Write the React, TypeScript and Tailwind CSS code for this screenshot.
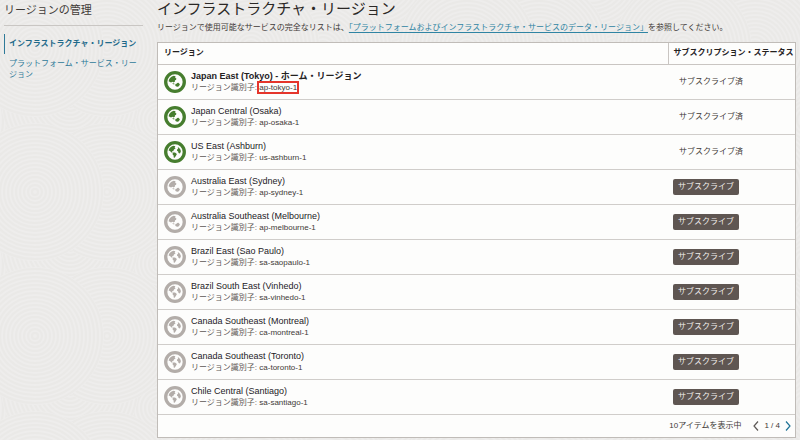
import { useState } from "react"

type GlobeKind = "asia" | "americas"

interface Region {
    name: string,
    id: string,
    globe: GlobeKind,
    subscribed?: boolean,
    home?: boolean
}

const regions: Region[] = [
    { name: "Japan East (Tokyo)", id: "ap-tokyo-1", globe: "asia", subscribed: true, home: true },
    { name: "Japan Central (Osaka)", id: "ap-osaka-1", globe: "asia", subscribed: true },
    { name: "US East (Ashburn)", id: "us-ashburn-1", globe: "americas", subscribed: true },
    { name: "Australia East (Sydney)", id: "ap-sydney-1", globe: "asia" },
    { name: "Australia Southeast (Melbourne)", id: "ap-melbourne-1", globe: "asia" },
    { name: "Brazil East (Sao Paulo)", id: "sa-saopaulo-1", globe: "americas" },
    { name: "Brazil South East (Vinhedo)", id: "sa-vinhedo-1", globe: "americas" },
    { name: "Canada Southeast (Montreal)", id: "ca-montreal-1", globe: "americas" },
    { name: "Canada Southeast (Toronto)", id: "ca-toronto-1", globe: "americas" },
    { name: "Chile Central (Santiago)", id: "sa-santiago-1", globe: "americas" },
]

const Globe = ({ kind, active }: { kind: GlobeKind, active?: boolean }) => (
    <svg viewBox="0 0 22 22" aria-hidden="true" className={`size-[22px] shrink-0 ${active ? "text-[#467d2e]" : "text-[#b3ada9]"}`}>
        <circle cx="11" cy="11" r="9.3" fill="none" stroke="currentColor" strokeWidth="3.3" />
        {kind === "asia" ? (
            <g fill="currentColor">
                <path d="M4.600 10.200C5 7.500 7 5.300 9.800 4.800l1.700.5-.3 1.400 1.200.9-.4 1.300-1.100.4.1 1.200-1.400 1-1.100-.8-1.500.9z" />
                <path d="M11.200 14.100c0-1 .9-1.400 1.500-1.400.3-.7 1.200-1.200 1.700-.9.4.6 1 1 1.500 1.400-.3 1.200-1.200 2.300-2.300 2.600-1.100.1-2.400-.5-2.400-1.700z" />
                <path d="M8.600 12.100l2 .6-.4.8-1.500-.4z" />
            </g>
        ) : (
            <g fill="currentColor">
                <path d="M4.600 9.400C5.200 7.100 6.900 5.400 9.300 4.800l2.100.4-.8 1.300 1 .8-1.600 1.300-.8 1.700-1.300-.3.800 1.600-1.300-.1-1.400-1.600z" />
                <path d="M8.900 11.400l2.100.1 1.900 1.400-.8 1.700-1.400 2.100-1-.1-.1-2.100-1.100-1.300z" />
                <path d="M13.700 6c1.700.8 2.900 2.300 3.200 4.200l-.9 2.200-1.500-.5-.3-1.400-1.200-.8.1-1.300 1.100-.8z" />
            </g>
        )}
    </svg>
)

const rings = [3, 7, 11, 15, 19, 23, 27, 31, 35, 39, 43, 47, 51, 55, 59, 63, 67]

const swirls = [
    [0, 20], [216, 20], [160, 120], [-56, 120], [160, -24],
    [70, 100], [70, -44], [286, 100], [107, 48], [107, 192], [35, 48], [35, 192], [251, 48],
]

const Backdrop = () => (
    <svg aria-hidden="true" className="absolute inset-0 -z-10 size-full">
        <defs>
            <pattern id="swirls" width="216" height="144" patternUnits="userSpaceOnUse">
                <rect width="216" height="144" fill="#edecea" />
                {swirls.map(([x, y]) => (
                    <g key={`${x}/${y}`} stroke="#eae9e7" strokeWidth="2" fill="none">
                        <circle cx={x} cy={y} r="69" fill="#eeedec" stroke="none" />
                        {rings.map((r) => <circle key={r} cx={x} cy={y} r={r} />)}
                    </g>
                ))}
            </pattern>
        </defs>
        <rect width="100%" height="100%" fill="url(#swirls)" />
    </svg>
)

const Chevron = ({ d }: { d: string }) => (
    <svg viewBox="0 0 6 10" aria-hidden="true" className="h-[10px] w-[6px]" fill="none" stroke="currentColor" strokeWidth="1.2">
        <path d={d} />
    </svg>
)

const App = () => {
    const [page, setPage] = useState(1)

    return (
        <div lang="ja" className="relative isolate flex min-h-screen bg-[#eeedec] font-['Liberation_Sans','Noto_Sans_CJK_JP',sans-serif] text-[8px] leading-[12px] text-[#3f3a37]">
            <Backdrop />
            <aside className="w-[157px] shrink-0 pr-[14px] pl-1">
                <h2 className="border-b border-[#c9c6c3] pt-[2px] pb-[7px] text-[11px] leading-4">リージョンの管理</h2>
                <nav className="mt-2 text-[#2f7a99]">
                    <a href="#infrastructure" className="block border-l border-[#2f7a99] py-1 pl-1 font-bold whitespace-nowrap text-[#1f6a8a]">インフラストラクチャ・リージョン</a>
                    <a href="#platform" className="block pt-1 pl-[5px] leading-[11px]">プラットフォーム・サービス・リージョン</a>
                </nav>
            </aside>
            <main className="min-w-0 flex-1 pr-1">
                <h1 className="text-[15px] leading-[18px] text-[#2b2826]">インフラストラクチャ・リージョン</h1>
                <p className="mt-1 mb-2 whitespace-nowrap">
                    リージョンで使用可能なサービスの完全なリストは、
                    <a href="#data-regions" className="text-[#2f84a3] underline underline-offset-2">「プラットフォームおよびインフラストラクチャ・サービスのデータ・リージョン」</a>
                    を参照してください。
                </p>
                <section className="border border-[#c0bcb8] bg-[#fdfdfc]">
                    <table className="w-full border-collapse text-left">
                        <thead>
                            <tr className="h-[21px] border-b border-[#c9c5c2] text-[#24211f]">
                                <th scope="col" className="pl-[6px] font-bold">リージョン</th>
                                <th scope="col" className="w-[127px] border-l border-[#c9c5c2] pl-[5px] font-bold whitespace-nowrap">サブスクリプション・ステータス</th>
                            </tr>
                        </thead>
                        <tbody>
                            {regions.map((region) => (
                                <tr key={region.id} className="h-[35px] border-b border-[#d0cdca]">
                                    <td className="pl-[6px]">
                                        <div className="flex items-center gap-[5px]">
                                            <Globe kind={region.globe} active={region.subscribed} />
                                            <div>
                                                <div className={`text-[9px] text-[#24211f] ${region.home ? "font-bold" : ""}`}>
                                                    {region.name}{region.home && " - ホーム・リージョン"}
                                                </div>
                                                <div className="text-[#5d5855]">
                                                    リージョン識別子: <span className={region.home ? "text-[#3f3a37] outline-2 outline-[#e5352b]" : "text-[#3f3a37]"}>{region.id}</span>
                                                </div>
                                            </div>
                                        </div>
                                    </td>
                                    <td className="pl-[5px]">
                                        {region.subscribed ? (
                                            <span className="pl-[6px]">サブスクライブ済</span>
                                        ) : (
                                            <button type="button" className="block h-4 w-[66px] rounded-xs bg-[#5f5652] text-[#f1efed]">サブスクライブ</button>
                                        )}
                                    </td>
                                </tr>
                            ))}
                        </tbody>
                    </table>
                    <footer className="flex h-[22px] items-center justify-end pr-1">
                        <span className="mr-3">10アイテムを表示中</span>
                        <button type="button" aria-label="前のページ" className="text-[#5d5855]" disabled={page === 1} onClick={() => setPage(page - 1)}>
                            <Chevron d="M5 .5 1 5l4 4.500" />
                        </button>
                        <span className="mx-[5px]">{page} / 4</span>
                        <button type="button" aria-label="次のページ" className="text-[#1f7396]" disabled={page === 4} onClick={() => setPage(page + 1)}>
                            <Chevron d="M1 .5 5 5 1 9.500" />
                        </button>
                    </footer>
                </section>
            </main>
        </div>
    )
}

export default App
